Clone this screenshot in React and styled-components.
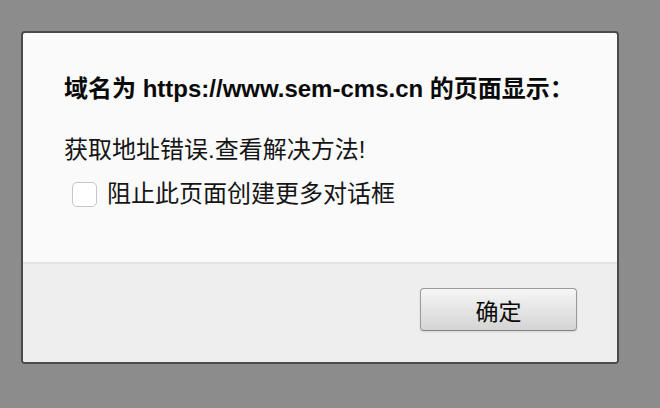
import React from "react"
import styled, { createGlobalStyle } from "styled-components"

const GlobalStyle = createGlobalStyle`
  html, body {
    margin: 0;
    padding: 0;
    background: #8c8c8c;
  }
  body {
    font-family: "Liberation Sans", "Noto Sans CJK SC", sans-serif;
  }
`

const Page = styled.div`
  width: 660px;
  height: 408px;
  padding: 31px 0 0 21px;
  box-sizing: border-box;
`

const Dialog = styled.div`
  width: 598px;
  box-sizing: border-box;
  border: 2px solid #4a4a4a;
  border-radius: 4px;
  background: #fafafa;
  overflow: hidden;
  display: flex;
  flex-direction: column;
`

const Content = styled.div`
  height: 229px;
  box-sizing: border-box;
  padding: 41px 20px 0 41px;
  display: flex;
  flex-direction: column;
`

const Title = styled.div`
  font-size: 24px;
  line-height: 30px;
  font-weight: bold;
  white-space: nowrap;
  color: #0a0a0a;
`

const Message = styled.div`
  margin-top: 31px;
  font-size: 24px;
  line-height: 30px;
  color: #151515;
`

const CheckRow = styled.label`
  margin-top: 16px;
  margin-left: 8px;
  display: flex;
  align-items: center;
  gap: 10px;
  font-size: 24px;
  line-height: 26px;
  color: #151515;
`

const Box = styled.span`
  width: 25px;
  height: 25px;
  box-sizing: border-box;
  border: 1px solid #c6c6c6;
  border-radius: 5px;
  background: #fff;
`

const Footer = styled.div`
  border-top: 2px solid #e2e2e2;
  background: #eeeeee;
  height: 100px;
  box-sizing: border-box;
  padding: 24px 40px 0 0;
  display: flex;
  justify-content: flex-end;
  align-items: flex-start;
`

const Button = styled.button`
  width: 157px;
  height: 43px;
  border: 1px solid #9a9a9a;
  border-bottom-color: #858585;
  border-radius: 4px;
  background: linear-gradient(to bottom, #f6f6f6, #d4d4d4);
  box-shadow: 0 1px 2px rgba(0, 0, 0, 0.12);
  font-family: "Liberation Sans", "Noto Sans CJK SC", sans-serif;
  font-size: 23px;
  color: #0a0a0a;
  padding: 0;
`

export default function App() {
  return (
    <>
      <GlobalStyle />
      <Page>
        <Dialog>
          <Content>
            <Title>域名为 https://www.sem-cms.cn 的页面显示：</Title>
            <Message>获取地址错误.查看解决方法!</Message>
            <CheckRow>
              <Box />
              阻止此页面创建更多对话框
            </CheckRow>
          </Content>
          <Footer>
            <Button>确定</Button>
          </Footer>
        </Dialog>
      </Page>
    </>
  )
}
